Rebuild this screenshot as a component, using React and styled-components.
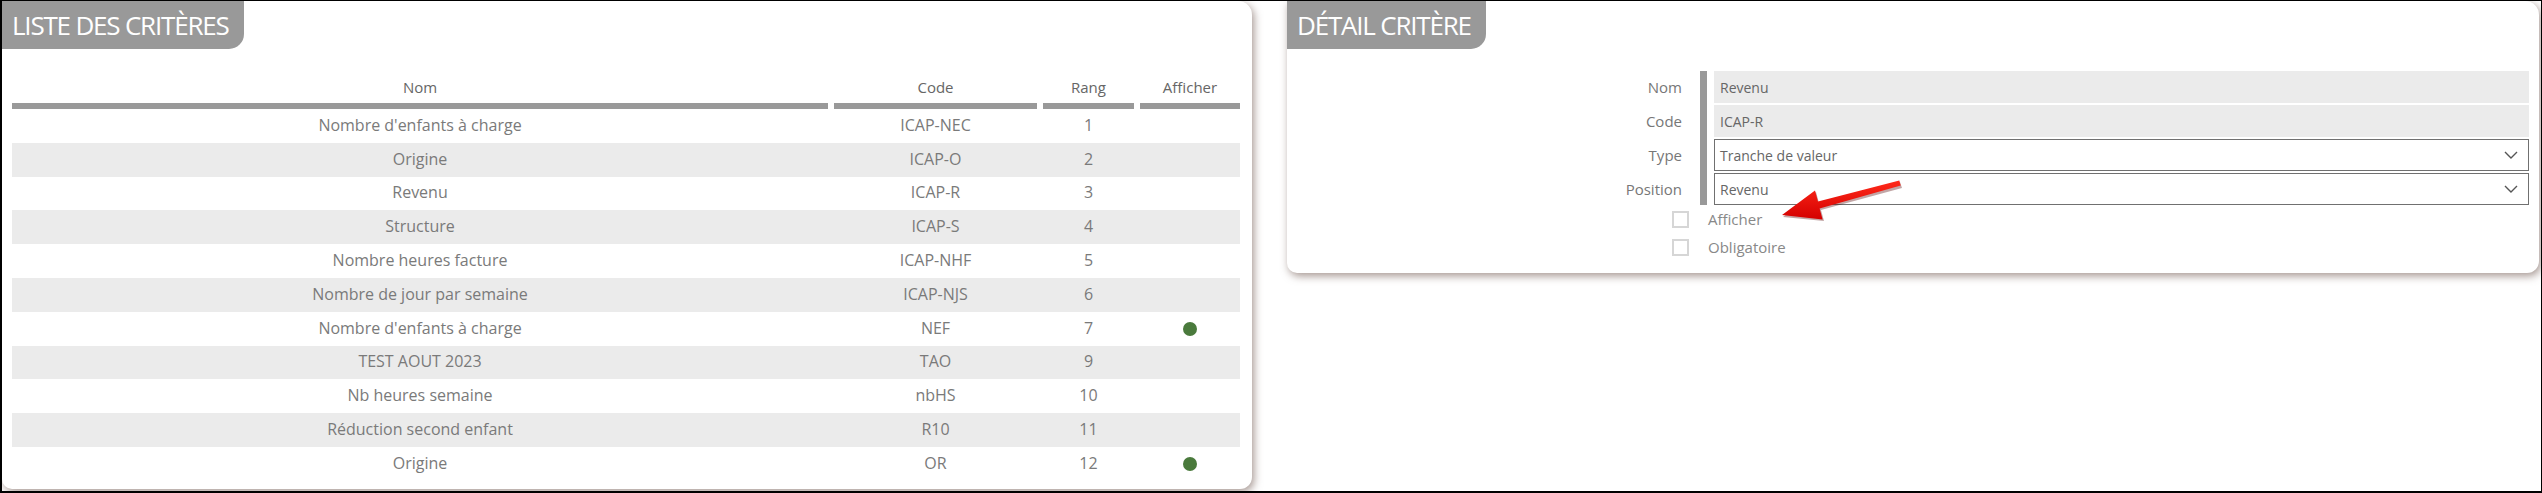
import styled, { createGlobalStyle } from 'styled-components';

const GlobalStyle = createGlobalStyle`
  html, body {
    margin: 0;
    padding: 0;
    background: #fff;
  }
  body {
    font-family: "Open Sans", "Liberation Sans", sans-serif;
  }
`;

const criteres = [
  { nom: "Nombre d'enfants à charge", code: 'ICAP-NEC', rang: 1 },
  { nom: 'Origine', code: 'ICAP-O', rang: 2 },
  { nom: 'Revenu', code: 'ICAP-R', rang: 3 },
  { nom: 'Structure', code: 'ICAP-S', rang: 4 },
  { nom: 'Nombre heures facture', code: 'ICAP-NHF', rang: 5 },
  { nom: 'Nombre de jour par semaine', code: 'ICAP-NJS', rang: 6 },
  { nom: "Nombre d'enfants à charge", code: 'NEF', rang: 7, afficher: true },
  { nom: 'TEST AOUT 2023', code: 'TAO', rang: 9 },
  { nom: 'Nb heures semaine', code: 'nbHS', rang: 10 },
  { nom: 'Réduction second enfant', code: 'R10', rang: 11 },
  { nom: 'Origine', code: 'OR', rang: 12, afficher: true },
];

const Chevron = () => (
  <svg width="14" height="8" viewBox="0 0 14 8">
    <polyline points="1,1 7,7 13,1" fill="none" stroke="#555" strokeWidth="1.4" />
  </svg>
);

const RedArrow = () => (
  <ArrowSvg width="132" height="48" viewBox="0 0 132 48">
    <defs>
      <linearGradient id="arrowFill" x1="0" y1="0" x2="0" y2="1">
        <stop offset="0" stopColor="#ff2a1a" />
        <stop offset="1" stopColor="#d40000" />
      </linearGradient>
    </defs>
    <polygon
      points="8,39 41,14 44,25 125,4 127,10 46,32 49,43"
      fill="rgba(80,0,0,0.35)"
    />
    <polygon
      points="7,37 40,12.5 43,23.6 124.3,2.6 125.7,7.4 44.6,30.4 47.6,41.5"
      fill="url(#arrowFill)"
    />
  </ArrowSvg>
);

const App = () => {
  return (
    <>
      <GlobalStyle />
      <Frame>
        <Panel $width={1250} $height={488}>
          <PanelTitle>LISTE DES CRITÈRES</PanelTitle>
          <Table>
            <HeadRow>
              <HeadCell>Nom</HeadCell>
              <HeadCell>Code</HeadCell>
              <HeadCell>Rang</HeadCell>
              <HeadCell>Afficher</HeadCell>
            </HeadRow>
            {criteres.map((c, i) => (
              <Row key={i} $alt={i % 2 === 1}>
                <Cell>{c.nom}</Cell>
                <Cell>{c.code}</Cell>
                <Cell>{c.rang}</Cell>
                <Cell>{c.afficher && <Dot />}</Cell>
              </Row>
            ))}
          </Table>
        </Panel>

        <Panel $width={1252} $height={272}>
          <PanelTitle>DÉTAIL CRITÈRE</PanelTitle>
          <Form>
            <Labels>
              <Label>Nom</Label>
              <Label>Code</Label>
              <Label>Type</Label>
              <Label>Position</Label>
            </Labels>
            <Bar />
            <Fields>
              <TextField>Revenu</TextField>
              <TextField>ICAP-R</TextField>
              <SelectField>
                Tranche de valeur
                <Chevron />
              </SelectField>
              <SelectField>
                Revenu
                <Chevron />
              </SelectField>
            </Fields>
          </Form>
          <Checks>
            <CheckRow>
              <Box />
              Afficher
            </CheckRow>
            <CheckRow>
              <Box />
              Obligatoire
            </CheckRow>
          </Checks>
          <RedArrow />
        </Panel>
      </Frame>
    </>
  );
};

const Frame = styled.div`
  box-sizing: border-box;
  width: 2542px;
  height: 493px;
  border: 1px solid #000;
  border-left-width: 2px;
  border-bottom-width: 2px;
  display: flex;
  align-items: flex-start;
  gap: 35px;
  overflow: hidden;
`;

const Panel = styled.section`
  position: relative;
  flex: none;
  width: ${(p) => p.$width}px;
  height: ${(p) => p.$height}px;
  background: #fff;
  border-radius: 0 14px 12px 10px;
  box-shadow: 2px 3px 9px rgba(105, 80, 72, 0.6);
  display: flex;
  flex-direction: column;
`;

const PanelTitle = styled.h2`
  align-self: flex-start;
  margin: 0;
  height: 48px;
  padding: 0 15px 0 10px;
  display: flex;
  align-items: center;
  background: #999;
  color: #fff;
  font-weight: 400;
  font-size: 26px;
  letter-spacing: -1.2px;
  border-bottom-right-radius: 15px;
`;

const Table = styled.div`
  margin: 22px 12px 0 10px;
`;

const HeadRow = styled.div`
  display: grid;
  grid-template-columns: 816px 203px 91px 1fr;
  column-gap: 6px;
`;

const HeadCell = styled.div`
  height: 38px;
  padding-bottom: 1px;
  box-sizing: border-box;
  border-bottom: 6px solid #999;
  display: flex;
  align-items: center;
  justify-content: center;
  color: #666;
  font-size: 15px;
`;

const Row = styled.div`
  display: grid;
  grid-template-columns: 816px 203px 91px 1fr;
  column-gap: 6px;
  height: 33.8px;
  box-sizing: border-box;
  padding-bottom: 2px;
  align-items: center;
  background: ${(p) => (p.$alt ? '#ebebeb' : 'transparent')};
  color: #7a7a7a;
  font-size: 16px;
`;

const Cell = styled.div`
  display: flex;
  justify-content: center;
  align-items: center;
`;

const Dot = styled.span`
  width: 14px;
  height: 14px;
  margin-top: 2px;
  border-radius: 50%;
  background: #4a7a3c;
`;

const Form = styled.div`
  display: flex;
  margin-top: 22px;
`;

const Labels = styled.div`
  width: 395px;
  display: flex;
  flex-direction: column;
  gap: 2px;
`;

const Label = styled.div`
  height: 32px;
  display: flex;
  align-items: center;
  justify-content: flex-end;
  color: #777;
  font-size: 15px;
`;

const Bar = styled.div`
  width: 7px;
  margin-left: 18px;
  background: #999;
`;

const Fields = styled.div`
  flex: 1;
  margin: 0 10px 0 7px;
  display: flex;
  flex-direction: column;
  gap: 2px;
`;

const TextField = styled.div`
  height: 32px;
  box-sizing: border-box;
  padding: 0 6px;
  display: flex;
  align-items: center;
  background: #ebebeb;
  color: #666;
  font-size: 14px;
`;

const SelectField = styled(TextField)`
  justify-content: space-between;
  padding: 0 10px 0 5px;
  background: #fff;
  border: 1px solid #707070;
`;

const Checks = styled.div`
  padding-left: 385px;
  display: flex;
  flex-direction: column;
`;

const CheckRow = styled.label`
  height: 28px;
  display: flex;
  align-items: center;
  gap: 19px;
  color: #888;
  font-size: 15px;
`;

const Box = styled.span`
  width: 17px;
  height: 17px;
  box-sizing: border-box;
  border: 2px solid #d6d6d6;
  background: #fff;
`;

const ArrowSvg = styled.svg`
  position: absolute;
  left: 488px;
  top: 177px;
`;

export default App;
